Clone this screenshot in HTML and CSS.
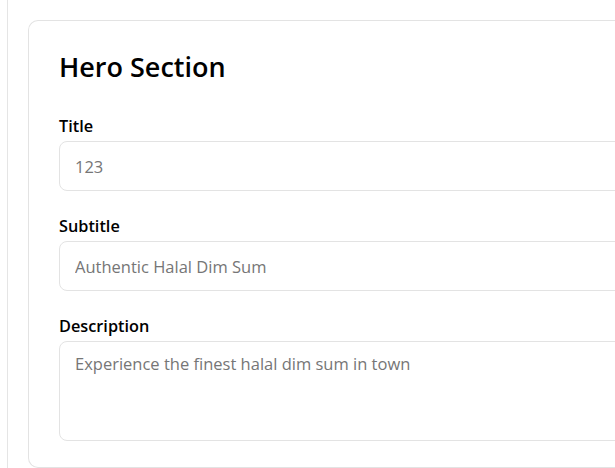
FILE: index.html
```html
<!DOCTYPE html>
<html>
<head>
<meta charset="utf-8">
<link rel="stylesheet" href="styles.css">
</head>
<body>
<div class="page">
  <main class="main">
    <section class="card">
      <h2 class="card-title">Hero Section</h2>
      <div class="field">
        <label class="label">Title</label>
        <input class="input" type="text" placeholder="123">
      </div>
      <div class="field">
        <label class="label">Subtitle</label>
        <input class="input" type="text" placeholder="Authentic Halal Dim Sum">
      </div>
      <div class="field">
        <label class="label">Description</label>
        <textarea class="input textarea" placeholder="Experience the finest halal dim sum in town"></textarea>
      </div>
    </section>
  </main>
</div>
</body>
</html>
```
FILE: styles.css
```css
* { box-sizing: border-box; }
html, body { margin: 0; padding: 0; background: #fff; }
body {
  font-family: "Open Sans", "Segoe UI", "Liberation Sans", sans-serif;
  color: #000;
  overflow: hidden;
  height: 468px;
}
.page { padding-left: 7px; height: 100%; }
.main {
  border-left: 1px solid #e5e5e5;
  padding: 20px 0 0 20px;
  height: 100%;
}
.card {
  border: 1px solid #e3e3e3;
  border-right: none;
  border-radius: 10px 0 0 10px;
  padding: 26px 0 26px 30px;
  margin-right: -20px;
}
.card-title {
  margin: 0 0 27px;
  font-size: 27px;
  font-weight: 600;
  line-height: 40px;
}
.field { margin-top: 23px; }
.field:first-of-type { margin-top: 0; }
.label {
  display: block;
  font-size: 16.3px;
  font-weight: 600;
  line-height: 24px;
  margin-bottom: 3px;
}
.input {
  display: block;
  width: 100%;
  height: 50px;
  border: 1px solid #e3e3e3;
  border-radius: 8px;
  padding: 0 15px;
  font-family: inherit;
  font-size: 16.5px;
  color: #333;
  background: #fff;
  outline: none;
}
.input::placeholder { color: #767676; }
.textarea {
  height: 100px;
  padding: 10px 15px;
  resize: none;
  line-height: 24px;
}
```
